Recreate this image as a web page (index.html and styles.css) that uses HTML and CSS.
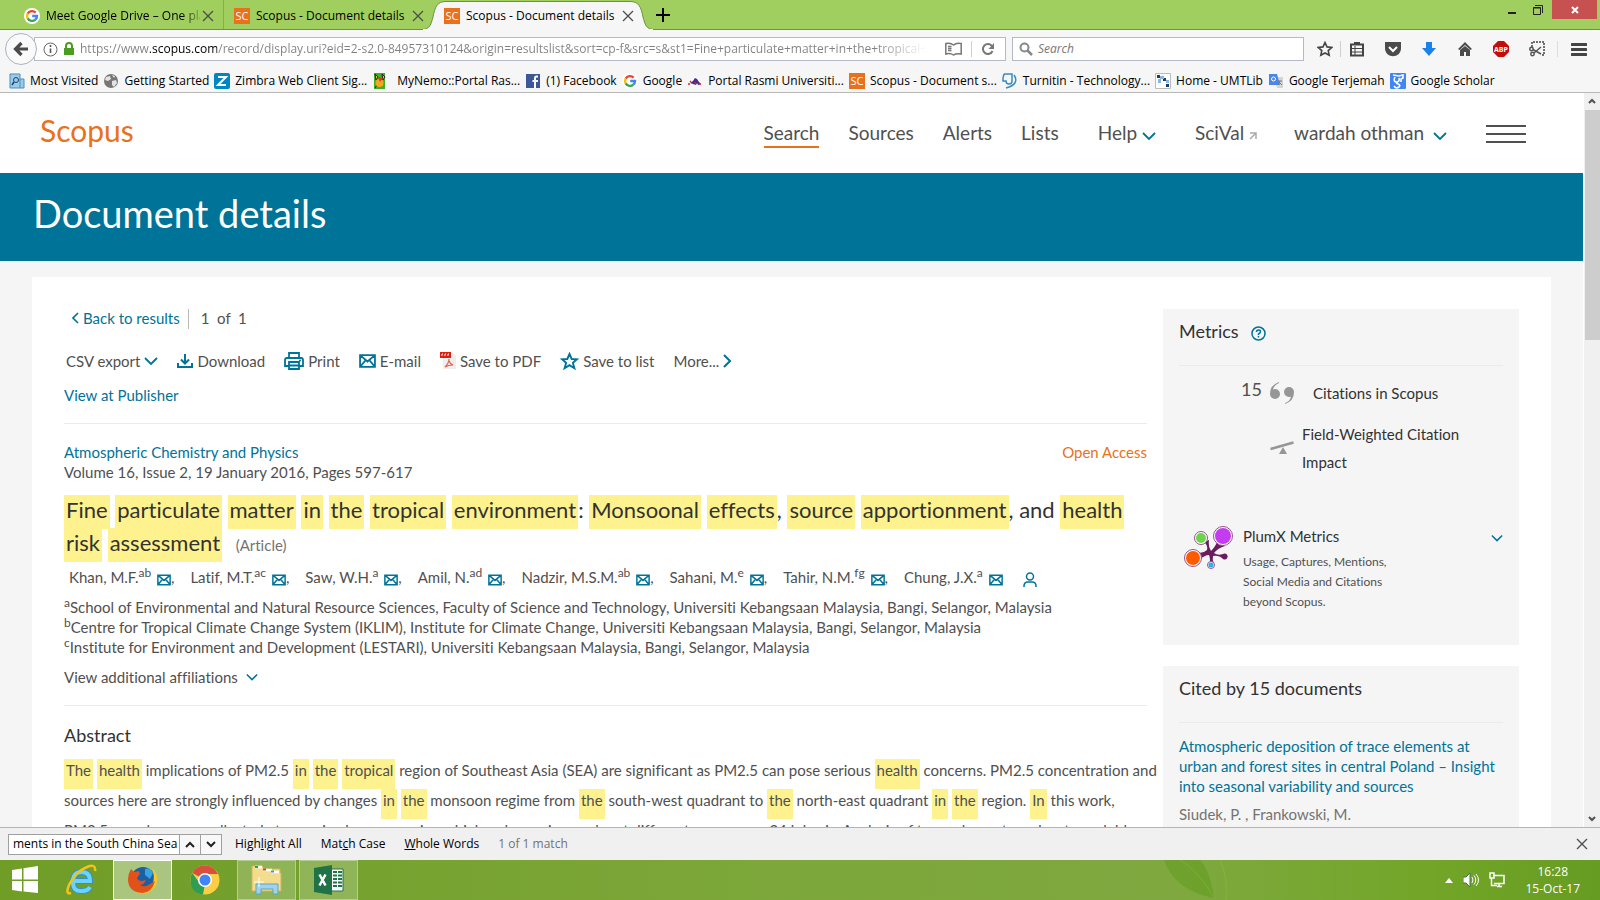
FILE: index.html
```html
<!DOCTYPE html>
<html lang="en">
<head>
<meta charset="UTF-8" />
<meta name="viewport" content="width=device-width, initial-scale=1" />
<title>Scopus - Document details</title>
<link rel="stylesheet" href="styles.css">
</head>
<body>
<svg class="defs" aria-hidden="true">
  <symbol id="mail" viewBox="0 0 16 13"><path d="M1 1h14v11H1z M1 1l7 6 7-6 M1 12l5-6 M15 12l-5-6" fill="none" stroke="#007398" stroke-width="1.700"/></symbol>
  <symbol id="down" viewBox="0 0 14 8"><path d="M1 1l6 6 6-6" fill="none" stroke="#007398" stroke-width="1.800"/></symbol>
  <symbol id="x" viewBox="0 0 12 12"><path d="M1 1l10 10M11 1L1 11" fill="none" stroke="#4d4d4d" stroke-width="1.300"/></symbol>
  <symbol id="sc" viewBox="0 0 16 16"><path d="M0 0h16v16H0z" fill="#e9711c"/><text x="8" y="12" text-anchor="middle" font-size="11" fill="#fff" font-family="Open Sans, sans-serif">SC</text></symbol>
  <symbol id="g" viewBox="0 0 16 16"><circle cx="8" cy="8" r="8" fill="#fff"/><g fill="none" stroke-width="2.400"><path d="M11.600 4.600A5 5 0 0 0 3.700 5.600" stroke="#ea4335"/><path d="M3.700 5.500A5 5 0 0 0 3.700 10.500" stroke="#fbbc05"/><path d="M3.700 10.400A5 5 0 0 0 11.300 11.700" stroke="#34a853"/><path d="M11.300 11.700A5 5 0 0 0 13 8H8.200" stroke="#4285f4"/></g></symbol>
</svg>

<header class="chrome">
  <div class="tabs">
    <div class="tab">
      <svg class="i16"><use href="#g"/></svg>
      <span class="tab-title fade">Meet Google Drive – One pla</span>
      <button class="plain" aria-label="Close tab"><svg class="i12"><use href="#x"/></svg></button>
    </div>
    <div class="tab">
      <svg class="i16"><use href="#sc"/></svg>
      <span class="tab-title">Scopus - Document details</span>
      <button class="plain" aria-label="Close tab"><svg class="i12"><use href="#x"/></svg></button>
    </div>
    <div class="tab active">
      <svg class="tab-shape" viewBox="0 0 232 30"><path d="M0 29.500C8 29.500 9 24 11 17C13 7 15 1.500 24 1.500H208C217 1.500 219 7 221 17C223 24 224 29.500 232 29.500" fill="#f6f6f6" stroke="#6c9143"/><path d="M1 30h230" stroke="#f6f6f6" stroke-width="2"/></svg>
      <svg class="i16"><use href="#sc"/></svg>
      <span class="tab-title">Scopus - Document details</span>
      <button class="plain" aria-label="Close tab"><svg class="i12"><use href="#x"/></svg></button>
    </div>
    <button class="plain new-tab" aria-label="New tab"><svg width="14" height="14"><path d="M7 0v14M0 7h14" stroke="#000" stroke-width="2"/></svg></button>
    <div class="window-buttons">
      <button class="plain minimize" aria-label="Minimize"><svg width="8" height="10"><path d="M0 8h8" stroke="#222" stroke-width="2"/></svg></button>
      <button class="plain" aria-label="Restore"><svg width="10" height="10"><path d="M.5 2.500h7v7h-7zM.5 3h7M2 .5h7.500V8" fill="none" stroke="#222"/></svg></button>
      <button class="plain close" aria-label="Close"><svg width="8" height="8"><path d="M1 1l6 6M7 1L1 7" stroke="#fff" stroke-width="2"/></svg></button>
    </div>
  </div>

  <div class="toolbar">
    <button class="back" aria-label="Back"><svg width="16" height="16" viewBox="0 0 16 16"><path d="M15 8H3M8.500 2L2.500 8l6 6" fill="none" stroke="#4b4b4b" stroke-width="3.200"/></svg></button>
    <div class="url-box">
      <svg width="15" height="15" viewBox="0 0 15 15"><circle cx="7.500" cy="7.500" r="6.500" fill="none" stroke="#666"/><path d="M7.500 3v2M7.500 6.500V11" stroke="#555" stroke-width="1.600"/></svg>
      <svg width="12" height="14" viewBox="0 0 12 14"><path d="M1 6h10v7H1z" fill="#4a9d1f"/><path d="M3 7V4a3 3 0 0 1 6 0v3" fill="none" stroke="#4a9d1f" stroke-width="2"/></svg>
      <input class="url" type="text" aria-label="Address" value="https://www.scopus.com/record/display.uri?eid=2-s2.0-84957310124&amp;origin=resultslist&amp;sort=cp-f&amp;src=s&amp;st1=Fine+particulate+matter+in+the+tropical+environment">
      <svg width="17" height="14" viewBox="0 0 17 14"><path d="M8.500 3C6 .8 3 1 .8 1.500V12c2.500-.6 5.500-.5 7.700 1 2.200-1.500 5-1.600 7.700-1V1.500C14 1 11 .8 8.500 3zM3 4.500h3.500M3 6.500h3.500M3 8.500h3.500" fill="none" stroke="#777" stroke-width="1.500"/></svg>
      <span class="vline"></span>
      <svg width="14" height="14" viewBox="0 0 14 14"><path d="M11.500 9A5 5 0 1 1 11 4" fill="none" stroke="#777" stroke-width="2"/><path d="M13 1v6H7.500z" fill="#777"/></svg>
    </div>
    <div class="search-box">
      <svg width="14" height="14" viewBox="0 0 14 14"><circle cx="5.500" cy="5.500" r="4" fill="none" stroke="#888" stroke-width="2"/><path d="M8.500 8.500L13 13" stroke="#888" stroke-width="2.500"/></svg>
      <input class="find-web" type="search" aria-label="Search the web" placeholder="Search">
    </div>
    <div class="star">
      <svg class="i16" viewBox="0 0 16 16"><path d="M8 1.500l2 4.400 4.800.5-3.600 3.200 1 4.700L8 12l-4.200 2.300 1-4.700L1.200 6.400 6 5.900z" fill="none" stroke="#444" stroke-width="1.600"/></svg>
      <span class="vline"></span>
    </div>
    <div class="tools">
      <svg class="i16" viewBox="0 0 16 16"><path d="M2 3.500h12v11H2z" fill="none" stroke="#444" stroke-width="2"/><path d="M5 1h6v3H5z" fill="#444"/><path d="M2 7.500h12M2 11h12M6 5v9" stroke="#444"/></svg>
      <svg class="i16" viewBox="0 0 16 16"><path d="M0 1h16v6c0 11-16 11-16 0z" fill="#4b4b4b"/><path d="M4 6l4 4 4-4" fill="none" stroke="#fff" stroke-width="2"/></svg>
      <svg class="i16" viewBox="0 0 16 16"><path d="M5 1h6v6h4l-7 8-7-8h4z" fill="#1a82ea"/></svg>
      <svg class="i16" viewBox="0 0 16 16"><path d="M8 1l7 7-1.500 1L8 4 2.500 9 1 8zM3 9l5-4 5 4v6H9v-4H7v4H3z" fill="#4b4b4b"/></svg>
      <svg class="i16" viewBox="0 0 16 16"><path d="M5 0h6l5 5v6l-5 5H5l-5-5V5z" fill="#c70d0c"/><text x="8" y="11" text-anchor="middle" font-size="7" font-weight="700" fill="#fff" font-family="Open Sans, sans-serif">ABP</text></svg>
      <svg class="i16" viewBox="0 0 16 16"><path d="M3 6V1h12v13h-3" fill="none" stroke="#444" stroke-width="1.500" stroke-dasharray="2 1"/><g fill="none" stroke="#555" stroke-width="1.500"><circle cx="2.500" cy="8" r="1.700"/><circle cx="3.500" cy="13" r="1.700"/><path d="M4 8.500l8 4.500M5 12l7-6"/></g></svg>
    </div>
    <button class="plain menu" aria-label="Menu"><svg width="16" height="13"><path d="M1 1.500h14M1 6.500h14M1 11.500h14" stroke="#444" stroke-width="3" stroke-linecap="round"/></svg></button>
  </div>

  <nav class="bookmarks">
    <a href="#"><svg class="i16" viewBox="0 0 16 16"><path d="M1 1h10v14H1zM11 6h4v9h-4" fill="#9bcbea" stroke="#4b8fbd"/><circle cx="7" cy="7" r="2.500" fill="none" stroke="#246"/><path d="M5 9l-2 3" stroke="#246" stroke-width="1.500"/></svg>Most Visited</a>
    <a href="#"><svg class="i16" viewBox="0 0 16 16"><circle cx="8" cy="8" r="7" fill="#777"/><path d="M3 4l4-1 1 3-3 2-3-1zM9 8l4-1 1 3-3 4-2-2zM9 2l3 1-1 2z" fill="#e4e4e4"/></svg>Getting Started</a>
    <a href="#"><svg class="i16" viewBox="0 0 16 16"><rect width="16" height="16" rx="2" fill="#0087c3"/><path d="M4 4h8l-8 8h8" fill="none" stroke="#fff" stroke-width="2"/></svg>Zimbra Web Client Sig...</a>
    <a href="#" class="wide"><svg class="i16" viewBox="0 0 16 16"><path d="M2 0h11v16H2z" fill="#3fae29"/><path d="M3 1l3 3-2 3zM10 1l3 3-2 3zM3 15l2-3" stroke="#222" fill="#f3d21b"/><circle cx="7.500" cy="10" r="4" fill="#f2a81d"/><path d="M6 4l5 1-3 4z" fill="#d9381e"/></svg>MyNemo::Portal Ras...</a>
    <a href="#"><svg class="i16" viewBox="0 0 16 16"><path d="M1 1h14v14H1z" fill="#3b5998"/><path d="M13 3.500h-1.500q-1.500 0-1.500 1.500v10M7.500 8H13" fill="none" stroke="#fff" stroke-width="2"/></svg>(1) Facebook</a>
    <a href="#"><svg class="i16"><use href="#g"/></svg>Google</a>
    <a href="#"><svg class="i16" viewBox="0 0 16 16"><path d="M3 10l3-2 2-3 2 1 2 3 2 2-3 1-1-2-1 2z" fill="#4a2a86"/><path d="M1 11h2M3 9l1-1M8 9l1 2M12 11h2" stroke="#d22" stroke-width="1.500"/></svg>Portal Rasmi Universiti...</a>
    <a href="#"><svg class="i16"><use href="#sc"/></svg>Scopus - Document s...</a>
    <a href="#"><svg class="i16" viewBox="0 0 16 16"><path d="M2 1h8v7q0 3-3 3T4 8H1V5l1-4M12 2q6 9-8 13" fill="none" stroke="#3a8bbd" stroke-width="1.500"/></svg>Turnitin - Technology...</a>
    <a href="#"><svg class="i16" viewBox="0 0 16 16"><path d="M.5.5h15v15H.5z" fill="#fff" stroke="#bbb"/><path d="M2 2h3v3H2zM8 5h3v3H8zM11 11h3v3h-3z" fill="#1d3c63"/><path d="M5 3h4v3H5zM3 6h3v4H3zM11 7h3v3h-3z" fill="#8fb4dd"/></svg>Home - UMTLib</a>
    <a href="#"><svg class="i16" viewBox="0 0 16 16"><path d="M6 4h9v11H9z" fill="#d5d5d5"/><path d="M1 1h8l3 11H1z" fill="#4a86e8"/><circle cx="5.500" cy="6" r="2" fill="none" stroke="#fff"/><path d="M10 8h4M12 8l-2 4M11 9l3 3" stroke="#777"/></svg>Google Terjemah</a>
    <a href="#"><svg class="i16" viewBox="0 0 16 16"><rect width="16" height="16" rx="1" fill="#4285f4"/><path d="M3 2l6 1 4-1v3l-2 1v3M5 4q-2 4 1 5 4 0 3-4M8 9q-3 1 0 2t1 3q-3 2-5-1" fill="none" stroke="#fff" stroke-width="1.600"/></svg>Google Scholar</a>
  </nav>
</header>

<div class="viewport">
  <div class="page">
    <header class="site-header">
      <a class="logo" href="#">Scopus</a>
      <nav class="site-nav">
        <a class="current" href="#">Search</a>
        <a href="#">Sources</a>
        <a href="#">Alerts</a>
        <a href="#">Lists</a>
        <a class="help" href="#">Help <svg class="chev"><use href="#down"/></svg></a>
        <a class="scival" href="#">SciVal <svg width="8" height="8"><path d="M1 1h6v6M7 1L1 7" fill="none" stroke="#aaa" stroke-width="1.500"/></svg></a>
        <a class="user" href="#">wardah othman <svg class="chev"><use href="#down"/></svg></a>
        <button class="plain burger" aria-label="Site menu"><svg width="40" height="20"><path d="M0 2h40M0 10h40M0 18h40" stroke="#505050" stroke-width="2"/></svg></button>
      </nav>
    </header>

    <div class="banner"><h1>Document details</h1></div>

    <div class="card">
      <main class="doc">
        <div class="crumbs">
          <a href="#"><svg width="7" height="12"><path d="M6 1L1 6l5 5" fill="none" stroke="#007398" stroke-width="1.600"/></svg>Back to results</a>
          <span class="count">1&nbsp; of &nbsp;1</span>
        </div>

        <div class="actions">
          <button class="plain">CSV export<svg class="chev"><use href="#down"/></svg></button>
          <button class="plain"><svg class="i16" viewBox="0 0 16 16"><path d="M1 10v4h14v-4M8 1v9M4 6.500l4 4 4-4" fill="none" stroke="#007398" stroke-width="2"/></svg>Download</button>
          <button class="plain"><svg width="20" height="18" viewBox="0 0 20 18"><path d="M5 6V1h10v5M5 14H1V8q0-2 2-2h14q2 0 2 2v6h-4M5 10h10v7H5zM5 13.500h10" fill="none" stroke="#007398" stroke-width="1.800"/><circle cx="16" cy="8.500" r="1" fill="#007398"/></svg>Print</button>
          <button class="plain"><svg width="17" height="14"><use href="#mail"/></svg>E-mail</button>
          <button class="plain"><svg width="16" height="18" viewBox="0 0 16 18"><path d="M3 1h10l3 3v13H3z" fill="#eee"/><path d="M0 0h11v6H0z" fill="#dd1f0d"/><path d="M2 4V2h1M5 4V2h1M8 4V2h1" stroke="#fff"/><path d="M5 15q4-4 4-8M9 9q1 3 4 4-5 0-8 2" fill="none" stroke="#e6604f" stroke-width="1.200"/></svg>Save to PDF</button>
          <button class="plain"><svg width="19" height="18" viewBox="0 0 19 18"><path d="M9.500 2l2.200 5 5.200.3-4 3.600 1.500 5.300-4.900-3-4.900 3 1.500-5.300-4-3.600 5.200-.3z" fill="none" stroke="#007398" stroke-width="1.900"/></svg>Save to list</button>
          <button class="plain">More...<svg width="8" height="14"><path d="M1 1l6 6-6 6" fill="none" stroke="#007398" stroke-width="2"/></svg></button>
        </div>

        <p class="publisher"><a href="#">View at Publisher</a></p>

        <section class="record">
          <div class="source">
            <a href="#">Atmospheric Chemistry and Physics</a>
            <span class="access">Open Access</span>
          </div>
          <p>Volume 16, Issue 2, 19 January 2016, Pages 597-617</p>

          <h2><mark>Fine</mark> <mark>particulate</mark> <mark>matter</mark> <mark>in</mark> <mark>the</mark> <mark>tropical</mark> <mark>environment</mark>: <mark>Monsoonal</mark> <mark>effects</mark>, <mark>source</mark> <mark>apportionment</mark>, and <mark>health</mark><br><mark>risk</mark> <mark>assessment</mark> <span class="kind">(Article)</span></h2>

          <ul class="authors">
            <li>Khan, M.F.<sup>ab</sup> <svg class="mail"><use href="#mail"/></svg>,</li>
            <li>Latif, M.T.<sup>ac</sup> <svg class="mail"><use href="#mail"/></svg>,</li>
            <li>Saw, W.H.<sup>a</sup> <svg class="mail"><use href="#mail"/></svg>,</li>
            <li>Amil, N.<sup>ad</sup> <svg class="mail"><use href="#mail"/></svg>,</li>
            <li>Nadzir, M.S.M.<sup>ab</sup> <svg class="mail"><use href="#mail"/></svg>,</li>
            <li>Sahani, M.<sup>e</sup> <svg class="mail"><use href="#mail"/></svg>,</li>
            <li>Tahir, N.M.<sup>fg</sup> <svg class="mail"><use href="#mail"/></svg>,</li>
            <li>Chung, J.X.<sup>a</sup> <svg class="mail"><use href="#mail"/></svg></li>
            <li class="person"><svg width="14" height="15" viewBox="0 0 14 15"><circle cx="7" cy="4.500" r="3.500" fill="none" stroke="#007398" stroke-width="1.500"/><path d="M1 15v-1q0-4 4-4h4q4 0 4 4v1" fill="none" stroke="#007398" stroke-width="1.500"/></svg></li>
          </ul>

          <p><sup>a</sup>School of Environmental and Natural Resource Sciences, Faculty of Science and Technology, Universiti Kebangsaan Malaysia, Bangi, Selangor, Malaysia</p>
          <p><sup>b</sup>Centre for Tropical Climate Change System (IKLIM), Institute for Climate Change, Universiti Kebangsaan Malaysia, Bangi, Selangor, Malaysia</p>
          <p><sup>c</sup>Institute for Environment and Development (LESTARI), Universiti Kebangsaan Malaysia, Bangi, Selangor, Malaysia</p>
          <button class="plain more-aff">View additional affiliations <svg width="12" height="8"><use href="#down"/></svg></button>
        </section>

        <section class="abstract">
          <h3>Abstract</h3>
          <p><mark>The</mark> <mark>health</mark> implications of PM2.5 <mark>in</mark> <mark>the</mark> <mark>tropical</mark> region of Southeast Asia (SEA) are significant as PM2.5 can pose serious <mark>health</mark> concerns. PM2.5 concentration and<br>sources here are strongly influenced by changes <mark>in</mark> <mark>the</mark> monsoon regime from <mark>the</mark> south-west quadrant to <mark>the</mark> north-east quadrant <mark>in</mark> <mark>the</mark> region. <mark>In</mark> this work,<br>PM2.5 samples were collected at a semi-urban area using a high-volume air sampler at different seasons on 24 h basis. Analysis of trace elements and water-soluble</p>
        </section>
      </main>

      <aside class="side">
        <section class="panel metrics">
          <h3>Metrics <svg width="15" height="15" viewBox="0 0 15 15"><circle cx="7.500" cy="7.500" r="6.500" fill="none" stroke="#007398" stroke-width="1.500"/><path d="M5.500 6q0-2 2-2t2 1.700q0 1-2 2.300v1M7.500 10v1.500" fill="none" stroke="#007398" stroke-width="1.500"/></svg></h3>
          <div class="metric cited">
            <span class="num">15</span>
            <svg width="24" height="22" viewBox="0 0 24 22"><path d="M9 0Q0 3 0 12a5 5 0 1 0 5-5q-1 0-2 .5Q4 3 9 1z" fill="#969696"/><path d="M15 22q9-3 9-12a5 5 0 1 0-5 5q1 0 2-.5-1 5-6 6.500z" fill="#969696"/></svg>
            <span class="label">Citations in Scopus</span>
          </div>
          <div class="metric">
            <span class="num"></span>
            <svg width="24" height="14" viewBox="0 0 24 14"><path d="M.5 8L23.500 1.500" stroke="#969696" stroke-width="2.500"/><path d="M13 6l4 7H9z" fill="#969696"/></svg>
            <span class="label">Field-Weighted Citation<br>Impact</span>
          </div>
          <div class="plumx">
            <svg width="49" height="43" viewBox="0 0 49 43"><path d="M27 25Q33 19 33 14l8 6q-7 2-11 7 4 3 9 1a3 3 0 1 1 0 5q-4-4-10-3-1 4 1 8h-5q2-4 0-9-4 0-10 5l-3-8q7 2 11-2 1-5-3-8l5-2q-1 6 2 11z" fill="#6b1b5e"/><g stroke="#94528c" stroke-width="1"><circle cx="39" cy="10" r="9.500" fill="#fff"/><circle cx="17" cy="12" r="6.500" fill="#fff"/><circle cx="9" cy="32" r="8.500" fill="#fff"/><circle cx="27" cy="39" r="3.500" fill="#fff"/></g><circle cx="39" cy="10" r="8" fill="#c43cf0"/><circle cx="17" cy="12" r="5" fill="#6bd64c"/><circle cx="9" cy="32" r="7" fill="#ff5a00"/><circle cx="27" cy="39" r="2.500" fill="#2ab0ea"/></svg>
            <div>
              <h4>PlumX Metrics</h4>
              <p>Usage, Captures, Mentions,<br>Social Media and Citations<br>beyond Scopus.</p>
            </div>
            <button class="plain" aria-label="Expand"><svg width="12" height="8"><use href="#down"/></svg></button>
          </div>
        </section>
        <section class="panel">
          <h3>Cited by 15 documents</h3>
          <a class="citing" href="#">Atmospheric deposition of trace elements at urban and forest sites in central Poland – Insight into seasonal variability and sources</a>
          <p class="by">Siudek, P. , Frankowski, M.</p>
        </section>
      </aside>
    </div>
  </div>

  <div class="scrollbar">
    <svg width="8" height="6"><path d="M1 5l3-3 3 3" fill="none" stroke="#505050" stroke-width="2"/></svg>
    <div class="thumb"></div>
    <svg width="8" height="6"><path d="M1 1l3 3 3-3" fill="none" stroke="#505050" stroke-width="2"/></svg>
  </div>
</div>

<div class="findbar">
  <div class="find-group">
    <input type="text" aria-label="Find in page" value="ments in the South China Sea">
    <button aria-label="Previous"><svg width="10" height="7"><path d="M1 6l4-4 4 4" fill="none" stroke="#222" stroke-width="2"/></svg></button>
    <button aria-label="Next"><svg width="10" height="7"><path d="M1 1l4 4 4-4" fill="none" stroke="#222" stroke-width="2"/></svg></button>
  </div>
  <button class="plain">High<u>l</u>ight All</button>
  <button class="plain">Mat<u>c</u>h Case</button>
  <button class="plain"><u>W</u>hole Words</button>
  <span class="matches">1 of 1 match</span>
  <button class="plain find-close" aria-label="Close find bar"><svg class="i12"><use href="#x"/></svg></button>
</div>

<footer class="taskbar">
  <button class="task" aria-label="Start"><svg width="28" height="28" viewBox="0 0 28 28"><path d="M1 4l10-1.500v11H1zM12.500 2.300L27 0v13.500H12.500zM1 15h10v10.500L1 24zM12.500 15H27v12l-14.500-1.500z" fill="#fff"/></svg></button>
  <button class="task" aria-label="Internet Explorer"><svg width="32" height="32" viewBox="0 0 32 32"><path d="M9 17h16q0-9-8.500-9T8 18t9 9q6 0 8-4" fill="none" stroke="#2a93cf" stroke-width="6"/><path d="M9 17h16q0-9-8.500-9T8 18t9 9q6 0 8-4" fill="none" stroke="#6fd3f7" stroke-width="4"/><path d="M6 29Q0 31 4 21 10 8 22 3q9-4 8 4" fill="none" stroke="#f3c31c" stroke-width="2.500"/></svg></button>
  <button class="task open on" aria-label="Firefox"><svg width="32" height="32" viewBox="0 0 32 32"><circle cx="16" cy="15" r="12" fill="#1b5fa5"/><path d="M18 5q5-2 8 4l-3 6-5-4z" fill="#3aa5dc"/><path d="M25 4q9 9 3 19-8 10-19 5 14 1 17-9 2-8-1-15z" fill="#fbc52d"/><path d="M4 5l3 3 5-1 1 3-3 4q1 3 5 3l4-1q-2 5-6 5 5 3 10-1l5-3q-3 12-13 12Q1 28 1 15q0-5 3-10z" fill="#e0521a"/></svg></button>
  <button class="task" aria-label="Chrome"><svg width="30" height="30" viewBox="0 0 30 30"><circle cx="15" cy="15" r="14.500" fill="#fbce44"/><path d="M15 15L2.500 8Q6 .5 15 .5T28 9H15z" fill="#d94f3d"/><path d="M2.300 8L11 20l4 -1-2 10.500Q.5 28 .5 15q0-4 1.800-7z" fill="#2f9e53"/><circle cx="15" cy="15" r="7" fill="#fff"/><circle cx="15" cy="15" r="5.500" fill="#4285f4"/></svg></button>
  <button class="task open" aria-label="File Explorer"><svg width="32" height="30" viewBox="0 0 32 30"><path d="M1 5V1h10l2 3h16v4h1v18H1z" fill="#f3dc8e" stroke="#d5b356"/><path d="M4 2h7M12 5h9M20 7h8" stroke="#fff" stroke-width="2.500"/><path d="M4 2h3" stroke="#1fae33" stroke-width="2"/><path d="M12 4.500h3" stroke="#d2452f" stroke-width="2"/><path d="M20 6.500h3" stroke="#3c97e0" stroke-width="2"/><path d="M5 29V19h22v10h-5v-5H10v5z" fill="#9fd3ea" stroke="#5ba5c8"/><path d="M8 12v10M3 17h10" stroke="#fff"/></svg></button>
  <button class="task open" aria-label="Excel"><svg width="30" height="30" viewBox="0 0 30 30"><path d="M17 4h12v22H17z" fill="#fff" stroke="#207346"/><path d="M19 7h4M24 7h4M19 10.500h4M24 10.500h4M19 14h4M24 14h4M19 17.500h4M24 17.500h4M19 21h4M24 21h4" stroke="#207346" stroke-width="2"/><path d="M0 3l18-3v30L0 27z" fill="#207346"/><path d="M5.500 9.500l6 11M11.500 9.500l-6 11" stroke="#fff" stroke-width="2.500"/></svg></button>
  <svg class="leaf" width="80" height="40" viewBox="0 0 80 40"><path d="M4 0q10 30 50 38Q50 10 40 0z" fill="#5d9a1c" opacity=".5"/><path d="M20 0q20 12 34 38M60 0q8 16 6 40" fill="none" stroke="#9ccb47" opacity=".3"/></svg>
  <div class="tray">
    <svg width="8" height="5"><path d="M4 0l4 5H0z" fill="#fff"/></svg>
    <svg class="i16" viewBox="0 0 16 16"><path d="M0 5h3l4-4v14l-4-4H0z" fill="#fff" stroke="#475"/><path d="M9 5q2 3 0 6M11 3.500q3.500 4.500 0 9M13 2q5 6 0 12" fill="none" stroke="#fff"/></svg>
    <svg class="i16" viewBox="0 0 16 16"><path d="M4 3.500h11v8H5M8 14.500h5M10 12v2M2.500 6v7.500H8M1 1h4v5H1z" fill="none" stroke="#fff" stroke-width="1.500"/></svg>
    <time>16:28<br>15-Oct-17</time>
  </div>
</footer>
</body>
</html>
```
FILE: styles.css
```css
:root {
  --ui: "Open Sans", "Noto Sans", sans-serif;
  --text: Lato, "Open Sans", sans-serif;
  --teal: #007398;
  --orange: #e9711c;
  --ink: #505050;
  --dark: #323232;
  --light: #f5f5f5;
  --rule: #ebebeb;
}
* {
  box-sizing: border-box;
}
body {
  margin: 0;
  height: 100vh;
  display: flex;
  flex-direction: column;
  overflow: hidden;
  font-family: var(--text);
  font-size: 15px;
  line-height: 20px;
  font-variant-ligatures: no-common-ligatures;
  color: var(--ink);
}
h1, h2, h3, h4, p, ul {
  margin: 0;
  padding: 0;
  font-weight: 400;
}
a {
  color: var(--teal);
  text-decoration: none;
}
svg {
  flex: none;
}
.defs {
  display: none;
}
.plain {
  background: none;
  border: none;
  padding: 0;
  font: inherit;
  color: inherit;
  display: flex;
  align-items: center;
}
.i16 { width: 16px; height: 16px; }
.i12 { width: 12px; height: 12px; }
.chev { width: 14px; height: 8px; }

/* browser chrome */
.chrome {
  background: #f6f6f6;
  border-bottom: 1px solid #b8b8b8;
  font-family: var(--ui);
  font-size: 12px;
  color: #000;
}
.tabs {
  height: 30px;
  display: flex;
  background: #a1cf5f;
  border-bottom: 1px solid #6c9143;
  padding-left: 14px;
}
.tab {
  position: relative;
  width: 210px;
  padding: 2px 9px 0 10px;
  display: flex;
  align-items: center;
  gap: 6px;
  border-right: 1px solid #86ad50;
}
.tab:nth-child(n+2) {
  border-color: transparent;
}
.tab > * {
  position: relative;
}
.tab .tab-shape {
  position: absolute;
  left: -12px;
  top: 0;
  width: 232px;
  height: 30px;
}
.tab-title {
  flex: 1;
  white-space: nowrap;
  overflow: hidden;
}
.fade {
  margin-right: -4px;
  mask-image: linear-gradient(to right, #000 88%, rgba(0, 0, 0, 0.2));
}
.new-tab {
  margin-left: 12px;
}
.window-buttons {
  margin-left: auto;
  margin-right: 3px;
  display: flex;
  align-items: flex-start;
  gap: 9px;
}
.window-buttons .plain {
  height: 19px;
}
.window-buttons .minimize {
  margin-right: 8px;
}
.window-buttons .close {
  width: 45px;
  justify-content: center;
  background: #c75050;
}
.toolbar {
  height: 38px;
  padding: 0 13px 0 5px;
  display: flex;
  align-items: center;
}
.back {
  width: 32px;
  height: 32px;
  padding: 0;
  margin-right: -3px;
  z-index: 1;
  display: grid;
  place-items: center;
  border: 1px solid #a9b3c0;
  border-radius: 50%;
  background: #fafafa;
}
.url-box, .search-box {
  height: 24px;
  display: flex;
  align-items: center;
  background: #fff;
  border: 1px solid #b3bac5;
}
.url-box {
  flex: 952;
  gap: 5px;
  padding: 0 10px 0 8px;
  margin-right: 6px;
}
.search-box {
  flex: 278;
  gap: 5px;
  padding: 0 6px;
}
.url, .find-web {
  flex: 1;
  min-width: 0;
  border: none;
  padding: 0;
  font: inherit;
  background: none;
  outline: none;
}
/* host name stays black, the tail fades out */
.url {
  margin-right: 14px;
  color: transparent;
  background: linear-gradient(to right, #808080 70px, #000 70px 137px, #808080 137px calc(100% - 50px), transparent);
  background-clip: text;
}
.find-web::placeholder {
  color: #777;
  font-style: italic;
}
.vline {
  width: 1px;
  height: 16px;
  background: #d0d0d0;
}
.url-box .vline {
  margin: 0 4px;
}
.star {
  display: flex;
  gap: 7px;
  margin-left: 13px;
}
.tools {
  display: flex;
  gap: 20px;
  padding: 0 12px 0 8px;
  border-right: 1px solid #dcdcdc;
}
.menu {
  margin-left: 13px;
}
.bookmarks {
  height: 24px;
  padding: 2px 9px 0;
  display: flex;
  align-items: center;
  gap: 5px;
}
.bookmarks a {
  display: flex;
  align-items: center;
  gap: 5px;
  color: #000;
  white-space: nowrap;
}
.bookmarks .wide {
  gap: 9px;
}

/* page */
.viewport {
  flex: 1;
  min-height: 0;
  display: flex;
}
.page {
  flex: 1;
  overflow: hidden;
  background: var(--light);
}
.site-header {
  height: 80px;
  padding: 2px 57px 0 40px;
  display: flex;
  align-items: center;
  background: #fff;
}
.logo {
  color: var(--orange);
  font-size: 30px;
  padding-bottom: 8px;
}
.site-nav {
  margin-left: auto;
  display: flex;
  align-items: center;
  gap: 29px;
  font-size: 19px;
  line-height: 26px;
}
.site-nav a {
  color: var(--ink);
  border-bottom: 2px solid transparent;
}
.site-nav .current {
  border-color: var(--orange);
}
.site-nav .help, .site-nav .scival {
  margin-left: 10px;
}
.site-nav .user {
  margin-left: 8px;
}
.site-nav .user .chev {
  margin-left: 4px;
}
.site-nav .burger {
  margin-left: 10px;
}
.banner {
  height: 88px;
  padding: 0 33px 8px;
  display: flex;
  align-items: center;
  background: var(--teal);
  color: #fff;
}
.banner h1 {
  font-size: 38px;
  line-height: 44px;
}
.card {
  margin: 16px 32px 0;
  padding: 32px;
  display: flex;
  gap: 16px;
  background: #fff;
}
.doc {
  flex: 1;
  min-width: 0;
}
.crumbs {
  display: flex;
  padding-left: 8px;
  line-height: 18px;
}
.crumbs a {
  display: flex;
  align-items: center;
  gap: 4px;
  padding: 0 8px 2px 0;
  border-right: 1px solid #b9b9b9;
}
.count {
  padding-left: 12px;
}
.actions {
  display: flex;
  gap: 19px;
  margin-top: 22px;
  padding-left: 2px;
}
.actions .plain {
  height: 20px;
  gap: 4px;
}
.publisher {
  padding: 14px 0 18px;
  border-bottom: 1px solid var(--rule);
}
.record {
  padding: 18px 0;
  border-bottom: 1px solid var(--rule);
}
.source {
  display: flex;
  justify-content: space-between;
}
.access {
  color: var(--orange);
}
h2 {
  margin-top: 11px;
  font-size: 22px;
  line-height: 33px;
  color: var(--dark);
  white-space: nowrap;
}
mark {
  padding: 2px 2px 10px;
  background: #fdf28d;
  color: inherit;
}
h2 mark {
  padding: 1px 2px 6px;
}
.kind {
  margin-left: 8px;
  font-size: 15px;
  color: #737373;
}
.authors {
  display: flex;
  gap: 16px;
  height: 20px;
  margin: 5px 0 10px;
  padding-left: 5px;
  list-style: none;
}
.person {
  margin-left: 4px;
}
.person svg {
  vertical-align: -4px;
}
sup {
  font-size: 12px;
  line-height: 0;
}
.record p {
  white-space: nowrap;
}
.mail {
  width: 14px;
  height: 12px;
  margin-left: 2px;
  vertical-align: -3px;
}
.more-aff {
  gap: 8px;
  margin-top: 10px;
}
.abstract {
  padding-top: 17px;
}
h3 {
  font-size: 18px;
  line-height: 24px;
  color: var(--dark);
}
.abstract p {
  margin-top: 8px;
  line-height: 30px;
  white-space: nowrap;
}

/* right column */
.side {
  width: 356px;
  display: flex;
  flex-direction: column;
  gap: 21px;
}
.panel {
  padding: 10px 16px;
  background: var(--light);
}
.panel h3 {
  padding-bottom: 22px;
  border-bottom: 1px solid var(--rule);
}
.metrics {
  height: 336px;
}
.metrics h3 svg {
  margin-left: 8px;
  vertical-align: -3px;
}
.metric {
  display: flex;
  align-items: center;
  gap: 8px;
  color: var(--dark);
  line-height: 28px;
}
.cited {
  padding: 13px 0;
}
.num {
  flex: none;
  align-self: flex-start;
  width: 83px;
  text-align: right;
  font-size: 18px;
  line-height: 20px;
  color: var(--ink);
}
.cited .label {
  padding-left: 11px;
}
.plumx {
  margin-top: 50px;
  display: grid;
  grid-template-columns: 54px 1fr 12px;
  gap: 5px;
  padding-left: 5px;
  color: var(--ink);
  font-size: 12px;
}
.plumx h4 {
  margin-bottom: 6px;
  font-size: 15px;
  color: var(--dark);
}
.plumx .plain {
  height: 24px;
}
.citing {
  display: block;
  margin-top: 13px;
}
.by {
  margin-top: 8px;
  color: #737373;
}
.scrollbar {
  width: 17px;
  padding: 5px 0;
  display: flex;
  flex-direction: column;
  align-items: center;
  background: #f0f0f0;
  border-left: 1px solid #fff;
}
.thumb {
  width: 15px;
  height: 230px;
  margin: 6px 0 auto;
  background: #cdcdcd;
}

/* find bar */
.findbar {
  height: 33px;
  display: flex;
  align-items: center;
  gap: 19px;
  padding: 0 12px 0 8px;
  background: #f0f0f0;
  border-top: 1px solid #b5b5b5;
  font-family: var(--ui);
  font-size: 12px;
  color: #000;
}
.find-group {
  display: flex;
  height: 21px;
  margin-right: -6px;
}
.find-group input {
  width: 172px;
  border: 1px solid #a0a0a0;
  padding: 0 0 0 4px;
  font: inherit;
}
.find-group button {
  width: 21px;
  padding: 0;
  display: grid;
  place-items: center;
  border: 1px solid #a0a0a0;
  border-left: none;
  background: #f8f8f8;
}
.matches {
  color: #737373;
}
.find-close {
  margin-left: auto;
}

/* taskbar */
.taskbar {
  height: 40px;
  display: flex;
  align-items: center;
  background: linear-gradient(to right, #6f9d26, #7ba637 40%, #7fa940 73%, #72a527 90%, #669c22);
  font-family: var(--ui);
  font-size: 12px;
  line-height: 17px;
  color: #fff;
}
.task {
  width: 59px;
  height: 40px;
  margin-right: 3px;
  padding: 0;
  display: grid;
  place-items: center;
  border: 1px solid transparent;
  background: none;
}
.task:first-child {
  width: 50px;
  margin-right: 1px;
}
.task.open {
  background: rgba(255, 255, 255, 0.2);
  border-color: rgba(255, 255, 255, 0.35);
}
.task.on {
  background: rgba(255, 255, 255, 0.4);
  border-color: #fff;
}
.leaf {
  margin-left: auto;
}
.tray {
  width: 360px;
  padding-right: 20px;
  display: flex;
  align-items: center;
  justify-content: flex-end;
  gap: 10px;
}
.tray time {
  margin-left: 10px;
  text-align: center;
}
```
